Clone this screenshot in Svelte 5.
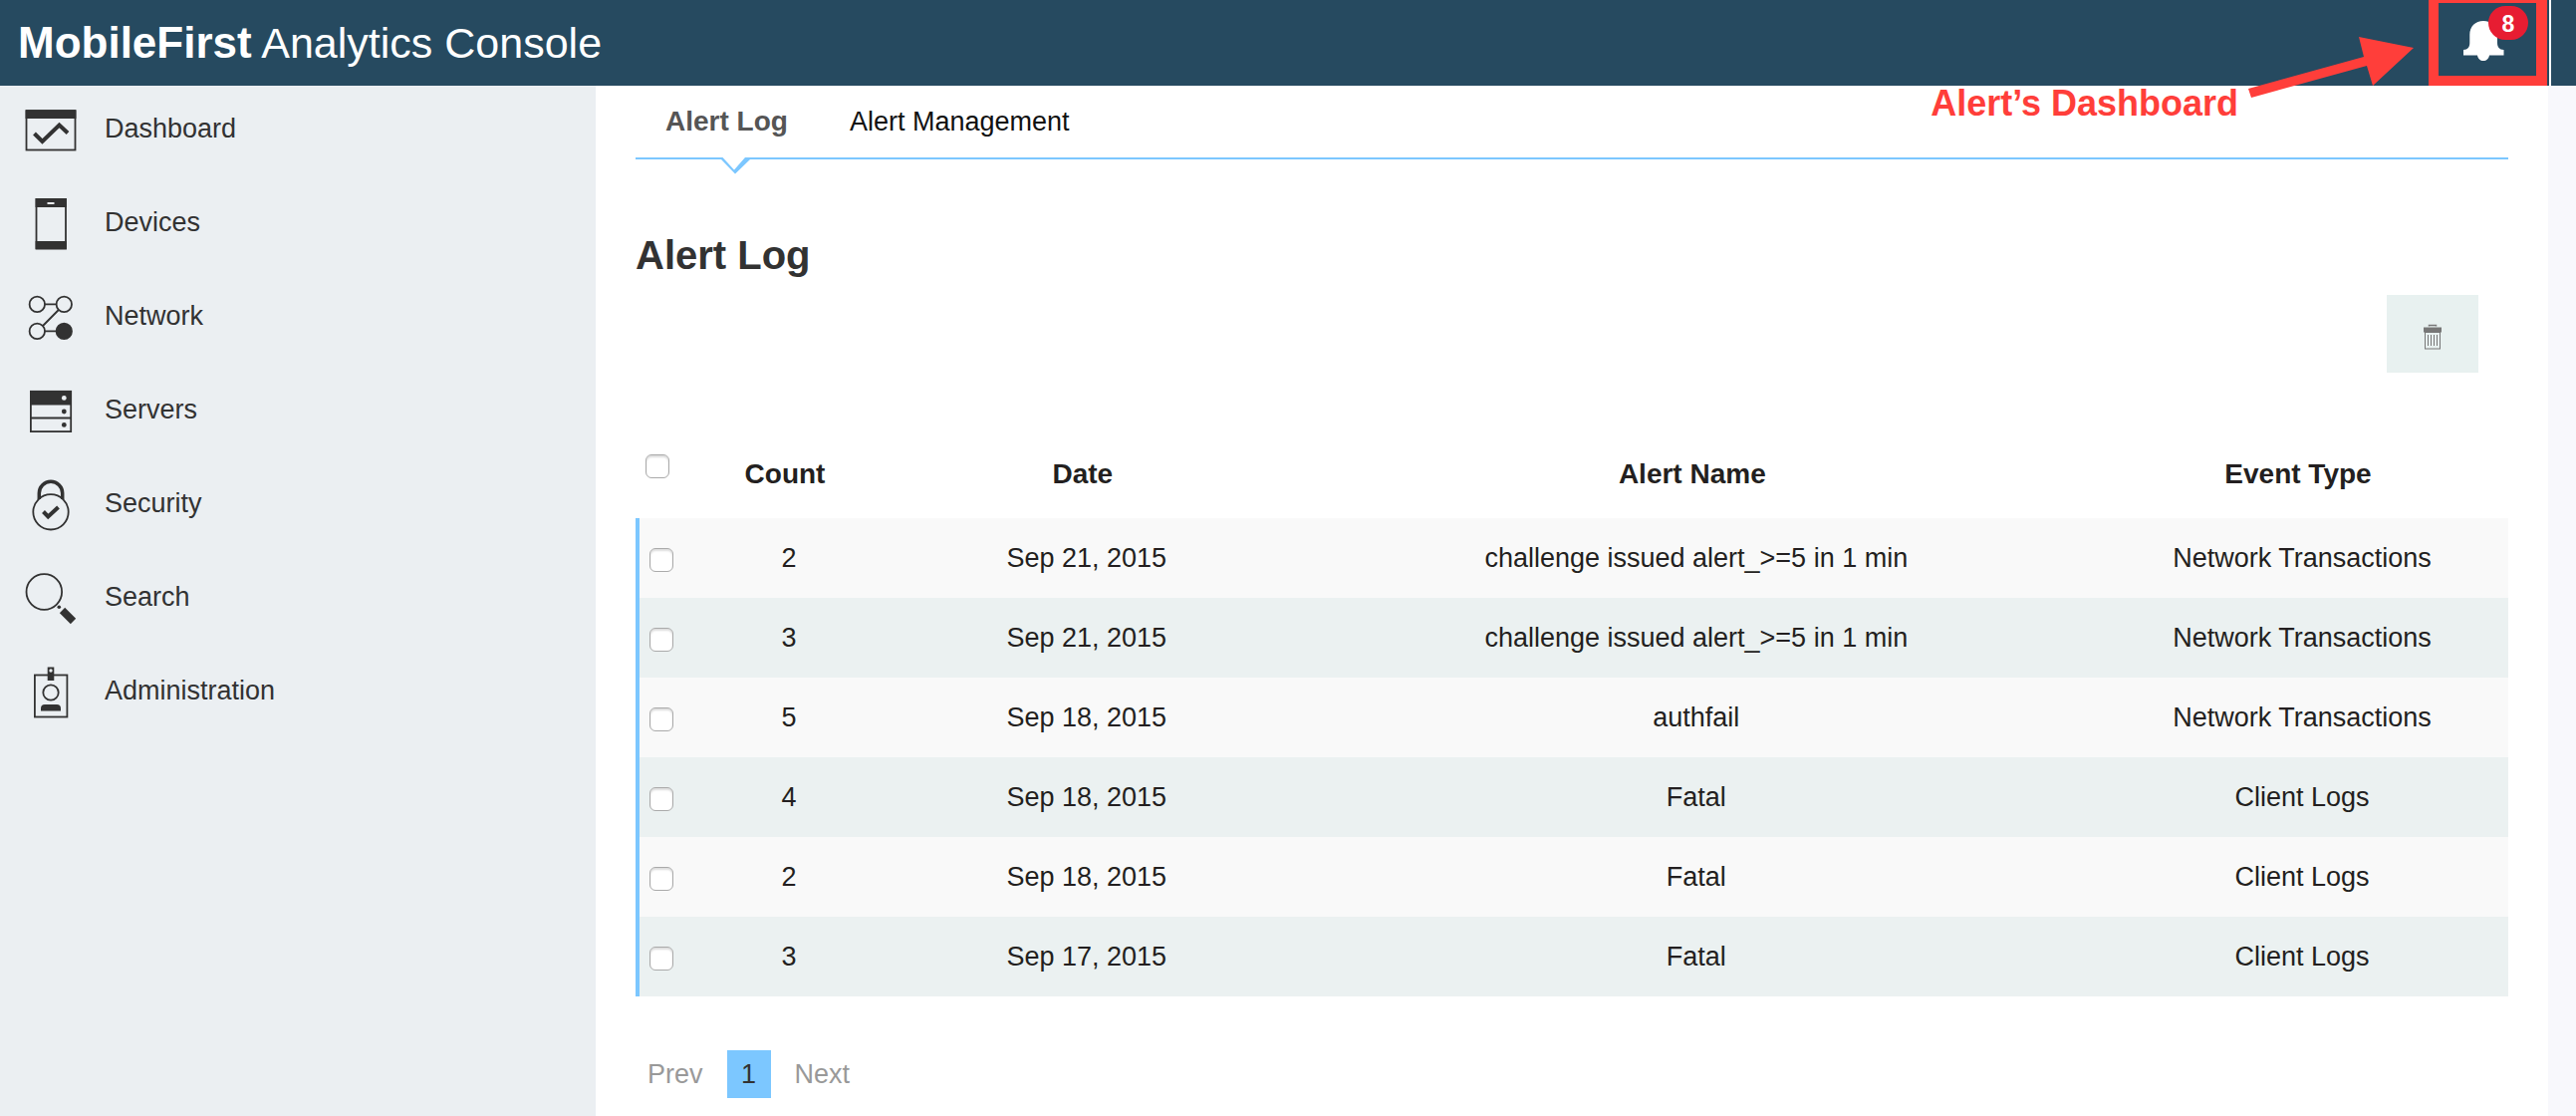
<script>
  const navItems = ['Dashboard', 'Devices', 'Network', 'Servers', 'Security', 'Search', 'Administration'];

  const alerts = [
    { count: 2, date: 'Sep 21, 2015', name: 'challenge issued alert_>=5 in 1 min', type: 'Network Transactions' },
    { count: 3, date: 'Sep 21, 2015', name: 'challenge issued alert_>=5 in 1 min', type: 'Network Transactions' },
    { count: 5, date: 'Sep 18, 2015', name: 'authfail', type: 'Network Transactions' },
    { count: 4, date: 'Sep 18, 2015', name: 'Fatal', type: 'Client Logs' },
    { count: 2, date: 'Sep 18, 2015', name: 'Fatal', type: 'Client Logs' },
    { count: 3, date: 'Sep 17, 2015', name: 'Fatal', type: 'Client Logs' }
  ];

  let selected = $state(alerts.map(() => false));
  let allSelected = $derived(selected.every(Boolean));

  function toggleAll(event) {
    selected = alerts.map(() => event.currentTarget.checked);
  }
</script>

<div class="app">
  <header class="topbar">
    <h1><strong>MobileFirst</strong> <span>Analytics Console</span></h1>
    <button class="bell" aria-label="Alerts, 8 new">
      <svg width="42" height="42" viewBox="0 0 42 42" aria-hidden="true">
        <path
          d="M21 1C13 1 7.300 6.500 7.300 15V23C7.300 27 5.500 30 1 30V35.500H15C15.500 39 18 41 21 41S26.500 39 27 35.500H41.500V30C37 30 35 27 35 23V15C35 6.500 29 1 21 1Z"
          fill="#fff"
        />
      </svg>
      <span class="badge">8</span>
    </button>
    <div class="callout">
      <span class="callout-text">Alert’s Dashboard</span>
      <svg class="arrow" width="168" height="62" viewBox="0 0 168 62" aria-hidden="true">
        <polygon points="2,53 118,21 113,1 168,12 127,50 121,30 5,62" fill="#ff3e3a" />
      </svg>
    </div>
  </header>

  <div class="body">
    <nav class="sidebar" aria-label="Main">
      <ul>
        {#each navItems as item}
          <li>
            <a href="#{item.toLowerCase()}">
              <svg width="52" height="52" viewBox="0 0 52 52" fill="none" stroke="#323232" stroke-width="1.800" aria-hidden="true">
                {#if item === 'Dashboard'}
                  <rect x="1.500" y="6" width="49" height="39.500" />
                  <path d="M0.600 5.500H51.400V14H0.600Z" fill="#323232" stroke="none" />
                  <path d="M9.500 29L17.500 37L34.500 20.500L43 28.500" stroke-width="4" />
                {:else if item === 'Devices'}
                  <rect x="11.500" y="1" width="29.500" height="49" />
                  <path d="M10.600 0H41.900V9H10.600ZM10.600 43H41.900V51.500H10.600Z" fill="#323232" stroke="none" />
                  <path d="M22.500 5H29.500" stroke="#ebeff2" stroke-width="2" />
                {:else if item === 'Network'}
                  <circle cx="12.300" cy="12.400" r="7.700" />
                  <circle cx="39.300" cy="12.400" r="7.700" />
                  <circle cx="12.300" cy="39.400" r="7.700" />
                  <circle cx="39.300" cy="39.400" r="7.700" fill="#323232" />
                  <path d="M20 12.400H31.500M20 39.400H31.500M33.800 18L18 34" />
                {:else if item === 'Servers'}
                  <rect x="5.900" y="5.800" width="40.300" height="40.300" />
                  <path d="M5 5H47V19.500H5Z" fill="#323232" stroke="none" />
                  <path d="M5 32.500H47" />
                  <circle cx="39.300" cy="12.400" r="2.400" fill="#ebeff2" stroke="none" />
                  <circle cx="39.300" cy="26" r="2.400" fill="#323232" stroke="none" />
                  <circle cx="39.300" cy="39.400" r="2.400" fill="#323232" stroke="none" />
                {:else if item === 'Security'}
                  <circle cx="26" cy="32.800" r="17.700" />
                  <path d="M14.300 20V14A11.700 11.700 0 0 1 37.700 14V20" stroke-width="3.500" />
                  <path d="M18.500 32.500L23.300 37.500L33.500 28" stroke-width="4" />
                {:else if item === 'Search'}
                  <circle cx="19.300" cy="19" r="17.800" />
                  <circle cx="34.300" cy="34.300" r="1.800" fill="#323232" stroke="none" />
                  <path d="M37.500 37.500L48.500 48.500" stroke-width="7.500" />
                {:else}
                  <rect x="9.900" y="8.500" width="32.500" height="42" />
                  <path d="M22.700 0.500H29.300V14H22.700Z" fill="#323232" stroke="none" />
                  <circle cx="26" cy="4" r="1.700" fill="#ebeff2" stroke="none" />
                  <circle cx="26" cy="26" r="7.700" />
                  <path d="M16 44.500V42Q16 38 20 38H32Q36 38 36 42V44.500Z" fill="#323232" stroke="none" />
                {/if}
              </svg>
              <span>{item}</span>
            </a>
          </li>
        {/each}
      </ul>
    </nav>

    <main>
      <nav class="tabs" aria-label="Alerts">
        <a class="active" href="#alert-log" aria-current="page">
          Alert Log
          <svg class="notch" width="30" height="18" viewBox="0 0 30 18" aria-hidden="true">
            <path d="M0 0H28V2L14 16L0 2Z" fill="#fff" />
            <path d="M0 0H1.500L13 12.500L24 0H29V2L14 16.500L0 2Z" fill="#7cc7ff" />
          </svg>
        </a>
        <a href="#alert-management">Alert Management</a>
      </nav>

      <h2>Alert Log</h2>

      <div class="toolbar">
        <button class="delete" aria-label="Delete selected alerts">
          <svg width="20" height="28" viewBox="0 0 20 28" fill="none" stroke="#777" aria-hidden="true">
            <path d="M6.500 3.500V2.500H13.500V3.500" stroke-width="1.500" />
            <path d="M1 4.500H19V9.500H1Z" fill="#777" stroke="none" />
            <rect x="2.500" y="9.500" width="15" height="16.500" />
            <path d="M5.500 12V23M8.500 12V23M11.500 12V23M14.500 12V23" />
          </svg>
        </button>
      </div>

      <table>
        <thead>
          <tr>
            <th class="check"><input type="checkbox" aria-label="Select all alerts" checked={allSelected} onchange={toggleAll} /></th>
            <th class="count">Count</th>
            <th class="date">Date</th>
            <th>Alert Name</th>
            <th class="type">Event Type</th>
          </tr>
        </thead>
        <tbody>
          {#each alerts as alert, i}
            <tr>
              <td class="check"><input type="checkbox" aria-label="Select alert {i + 1}" bind:checked={selected[i]} /></td>
              <td>{alert.count}</td>
              <td>{alert.date}</td>
              <td>{alert.name}</td>
              <td>{alert.type}</td>
            </tr>
          {/each}
        </tbody>
      </table>

      <nav class="pager" aria-label="Pages">
        <button>Prev</button>
        <button class="current" aria-current="page">1</button>
        <button>Next</button>
      </nav>
    </main>
  </div>
</div>

<style>
  :global(body) {
    background: #fff;
    font-family: 'Liberation Sans', Arial, sans-serif;
    font-size: 27px;
    line-height: 32px;
    color: #231f20;
  }

  .app {
    display: flex;
    flex-direction: column;
    min-height: 100vh;
  }

  button {
    border: 0;
    padding: 0;
    background: none;
    font: inherit;
    color: inherit;
    cursor: pointer;
  }

  a {
    color: inherit;
    text-decoration: none;
  }

  .topbar {
    position: relative;
    display: flex;
    align-items: stretch;
    justify-content: space-between;
    height: 86px;
    padding: 0 25px 0 18px;
    background: #264a60;
    color: #fff;
  }

  h1 {
    margin: 0;
    font-size: 43px;
    font-weight: 400;
    line-height: 86px;
  }

  h1 strong {
    font-size: 44px;
  }

  .bell {
    position: relative;
    box-sizing: border-box;
    width: 123px;
    border-right: 2px solid #fff;
    text-align: left;
  }

  .bell::before {
    content: '';
    position: absolute;
    inset: 0 2px 0 0;
    border: 10px solid #ff3e3a;
    border-top-width: 3px;
    border-right-width: 11px;
  }

  .bell svg {
    position: absolute;
    left: 34px;
    top: 20px;
  }

  .badge {
    position: absolute;
    left: 60px;
    top: 6px;
    width: 40px;
    height: 34px;
    border-radius: 17px;
    background: #e71d32;
    font-size: 23px;
    font-weight: 700;
    line-height: 36px;
    text-align: center;
  }

  .callout {
    position: absolute;
    right: 163px;
    top: 36px;
    display: flex;
    align-items: flex-start;
    gap: 8px;
    color: #ff3e3a;
    font-size: 36px;
    font-weight: 700;
    line-height: 40px;
    white-space: nowrap;
  }

  .callout-text {
    padding-top: 48px;
  }

  .body {
    display: flex;
    flex: 1;
  }

  .sidebar {
    flex: 0 0 598px;
    background: #ebeff2;
    color: #323232;
  }

  .sidebar ul {
    display: flex;
    flex-direction: column;
    gap: 42px;
    margin: 0;
    padding: 19px 25px;
    list-style: none;
  }

  .sidebar a {
    display: flex;
    align-items: center;
    gap: 28px;
  }

  .sidebar span {
    padding-bottom: 4px;
  }

  main {
    flex: 1;
    min-width: 0;
    padding: 0 40px;
    border-right: 28px solid #f8f8fc;
  }

  .tabs {
    display: flex;
    gap: 62px;
    padding: 0 30px;
    border-bottom: 2px solid #7cc7ff;
    line-height: 72px;
    color: #111;
  }

  .active {
    position: relative;
    color: #555;
    font-size: 28px;
    font-weight: 700;
  }

  .notch {
    position: absolute;
    left: 56px;
    top: 72px;
  }

  h2 {
    margin: 72px 0 16px;
    color: #323232;
    font-size: 40px;
    line-height: 48px;
  }

  .toolbar {
    display: flex;
    justify-content: flex-end;
    padding-right: 30px;
  }

  .delete {
    display: flex;
    align-items: center;
    justify-content: center;
    width: 92px;
    height: 78px;
    padding-top: 6px;
    background: #e8f1f0;
  }

  table {
    width: 100%;
    margin-top: 58px;
    border-collapse: separate;
    border-spacing: 0;
    table-layout: fixed;
  }

  th {
    height: 88px;
    padding: 0 8px 0 0;
    font-size: 28px;
  }

  td {
    height: 80px;
    padding: 0;
    text-align: center;
  }

  .count {
    width: 168px;
  }

  .date {
    width: 22%;
  }

  .type {
    width: 406px;
  }

  .check {
    text-align: left;
  }

  .check input {
    display: block;
    appearance: none;
    box-sizing: border-box;
    width: 24px;
    height: 24px;
    margin: 0 0 0 10px;
    border: 1px solid #aaa;
    border-radius: 6px;
    background: #fff;
    box-shadow: inset 0 2px 2px #ddd;
  }

  .check input:checked {
    background: #7cc7ff;
  }

  th.check {
    width: 58px;
    height: 72px;
    padding-bottom: 16px;
  }

  td.check {
    height: 76px;
    padding-top: 4px;
    border-left: 4px solid #7cc7ff;
  }

  tbody tr {
    background: #f9f9f9;
  }

  tbody tr:nth-child(even) {
    background: #ebf1f1;
  }

  .pager {
    display: flex;
    gap: 24px;
    padding: 54px 12px 18px;
    color: #999;
    line-height: 48px;
  }

  .current {
    width: 44px;
    background: #7cc7ff;
    color: #323232;
  }
</style>
